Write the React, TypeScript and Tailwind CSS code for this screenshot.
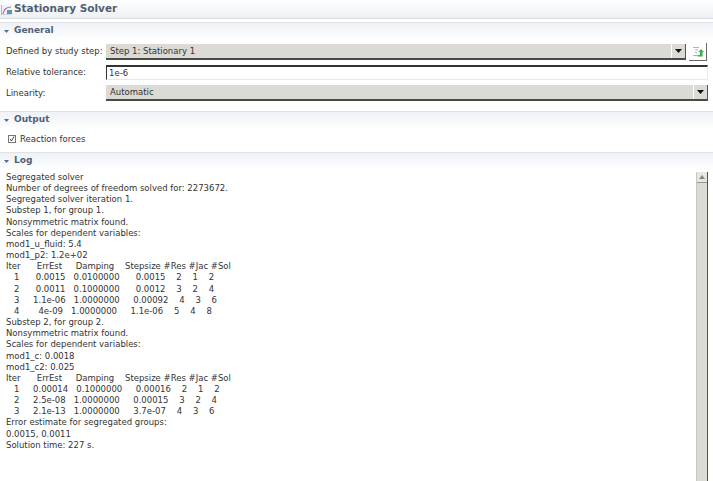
const logText = `Segregated solver
Number of degrees of freedom solved for: 2273672.
Segregated solver iteration 1.
Substep 1, for group 1.
Nonsymmetric matrix found.
Scales for dependent variables:
mod1_u_fluid: 5.4
mod1_p2: 1.2e+02
Iter      ErrEst     Damping    Stepsize #Res #Jac #Sol
   1      0.0015   0.0100000      0.0015    2    1    2
   2      0.0011   0.1000000      0.0012    3    2    4
   3     1.1e-06   1.0000000     0.00092    4    3    6
   4       4e-09   1.0000000     1.1e-06    5    4    8
Substep 2, for group 2.
Nonsymmetric matrix found.
Scales for dependent variables:
mod1_c: 0.0018
mod1_c2: 0.025
Iter      ErrEst     Damping    Stepsize #Res #Jac #Sol
   1     0.00014   0.1000000     0.00016    2    1    2
   2     2.5e-08   1.0000000     0.00015    3    2    4
   3     2.1e-13   1.0000000     3.7e-07    4    3    6
Error estimate for segregated groups:
0.0015, 0.0011
Solution time: 227 s.`

const Section = ({ title }: { title: string }) => (
    <div className="h-[18px] shrink-0 flex items-start gap-[5px] pl-[4px] border-t border-[#dfe3e8] bg-gradient-to-b from-[#eef1f6] to-white">
        <svg width="5" height="3" viewBox="0 0 7 4" className="mt-[7px]">
            <path d="M0 0h7L3.5 4z" fill="#5a6b80" />
        </svg>
        <span className="text-[9px] leading-[14px] font-bold text-[#4f6178]">{title}</span>
    </div>
)

const Combo = ({ text }: { text: string }) => (
    <div className="flex-1 h-[16px] flex items-center justify-between bg-[#dcdad5] border-b-2 border-[#4a4a48] pl-[4px] pr-0">
        <span className="text-[8.5px] mt-[1px] text-[#333]">{text}</span>
        <div className="h-[14px] w-[15px] flex items-center justify-center border-l border-white border-r border-r-[#555]">
            <svg width="7" height="4" viewBox="0 0 7 4">
                <path d="M0 0h7L3.5 4z" fill="#111" />
            </svg>
        </div>
    </div>
)

const Label = ({ text }: { text: string }) => (
    <span className="w-[100px] shrink-0 text-[8.5px] text-[#333]">{text}</span>
)

export default function App() {
    return (
        <div className="w-[713px] h-[481px] overflow-hidden bg-white flex flex-col font-['DejaVu_Sans',sans-serif]">
            <div className="h-[19px] shrink-0 flex items-center gap-[2px] pl-[1px] pb-[1px] bg-gradient-to-b from-white to-[#edf0f3] border-b border-[#d8dadd]">
                <svg width="11" height="10" viewBox="0 0 11 10" className="mt-[3px]">
                    <rect x="0" y="0" width="11" height="10" fill="#f4f1f6" />
                    <path d="M0.5 0v10h10" fill="none" stroke="#aab4c0" />
                    <path d="M2 9C3 4 5 2.5 10 2" fill="none" stroke="#c060c0" strokeWidth="1.2" />
                    <rect x="6" y="5" width="5" height="4" fill="#4f9fa8" />
                </svg>
                <span className="text-[10.5px] font-bold text-[#4f5f70]">Stationary Solver</span>
            </div>
            <div className="h-[3px] shrink-0" />

            <Section title="General" />
            <div className="h-[71px] shrink-0 flex flex-col gap-[5px] pl-[6px] pr-[5px] pt-[3px]">
                <div className="flex items-center h-[17px]">
                    <Label text="Defined by study step:" />
                    <Combo text="Step 1: Stationary 1" />
                    <div className="ml-[3px] mr-[1px] w-[18px] h-[18px] flex items-center justify-center border-b border-r border-[#666]">
                        <svg width="12" height="11" viewBox="0 0 12 11">
                            <path d="M1 1.5h6M3 4h3M3 6.5h2M1 9.5h4" stroke="#aab4be" fill="none" />
                            <path d="M9 3L6.5 6H8v3H5.5v1.5h5V6H12z" fill="#3cb043" />
                        </svg>
                    </div>
                </div>
                <div className="flex items-center h-[15px]">
                    <Label text="Relative tolerance:" />
                    <div className="flex-1 h-[15px] flex items-center pl-[2px] border-t-2 border-l border-[#333] border-r border-r-[#e8e8e8] border-b border-b-[#e8e8e8]">
                        <span className="text-[8.5px] text-[#333]">1e-6</span>
                    </div>
                </div>
                <div className="flex items-center h-[16px]">
                    <Label text="Linearity:" />
                    <Combo text="Automatic" />
                </div>
            </div>

            <Section title="Output" />
            <div className="h-[23px] shrink-0 flex items-center gap-[4px] pl-[8px] pb-[3px]">
                <div className="w-[8px] h-[8px] flex items-center justify-center border border-[#777] bg-white">
                    <svg width="6" height="6" viewBox="0 0 6 6">
                        <path d="M1 3l1.5 2L5 0.5" fill="none" stroke="#444" />
                    </svg>
                </div>
                <span className="text-[8.5px] text-[#333]">Reaction forces</span>
            </div>

            <Section title="Log" />
            <div className="flex-1 flex min-h-0 pt-[2px] pl-[6px] pr-[5px]">
                <pre className="flex-1 font-['DejaVu_Sans',sans-serif] text-[8.5px] leading-[11.15px] text-[#333] whitespace-pre">{logText}</pre>
                <div className="w-[12px] flex flex-col bg-[#dcdad5] border-l border-[#c8c6c1] border-r border-r-[#555]">
                    <div className="h-[11px] flex items-center justify-center bg-[#e8e6e2] border-b border-[#999]">
                        <svg width="6" height="4" viewBox="0 0 6 4">
                            <path d="M3 0l3 4H0z" fill="#888" />
                        </svg>
                    </div>
                </div>
            </div>
        </div>
    )
}
